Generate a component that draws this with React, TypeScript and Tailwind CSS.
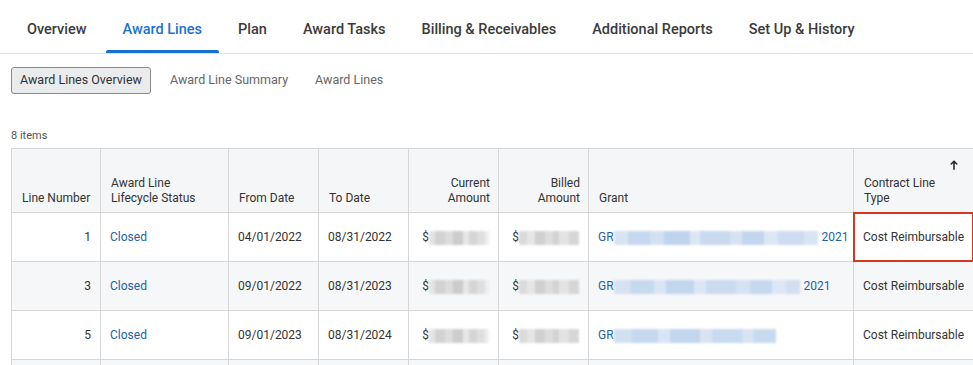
import React from "react";

const tabs = ["Overview", "Award Lines", "Plan", "Award Tasks", "Billing & Receivables", "Additional Reports", "Set Up & History"];

type Blk = [number, string];

function Blur({ blocks }: { blocks: Blk[] }) {
  return (
    <span className="inline-flex h-[14px] align-middle blur-[0.8px]">
      {blocks.map(([w, c], i) => (
        <span key={i} style={{ width: w, background: c }} className="h-full" />
      ))}
    </span>
  );
}

const grayA: Blk[] = [[6, "#e4e4e4"], [10, "#d2d2d2"], [8, "#dcdcdc"], [10, "#cccccc"], [6, "#e6e6e6"], [8, "#d5d5d5"], [8, "#dfdfdf"], [4, "#eeeeee"]];
const grayB: Blk[] = [[8, "#dadada"], [8, "#e6e6e6"], [10, "#d0d0d0"], [8, "#dddddd"], [6, "#d3d3d3"], [10, "#e3e3e3"], [10, "#d6d6d6"]];

const blueA: Blk[] = [[14, "#d6e4f3"], [22, "#c6d8ee"], [14, "#d2e1f2"], [26, "#c0d4ed"], [10, "#dbe7f5"], [30, "#c9daef"], [12, "#d6e3f3"], [22, "#c3d6ed"], [14, "#dce7f5"], [26, "#cddcf0"], [14, "#d8e5f4"]];
const blueB: Blk[] = [[16, "#d4e2f3"], [24, "#c7d9ee"], [12, "#d9e5f4"], [28, "#c2d6ed"], [12, "#dbe6f5"], [30, "#cadbf0"], [14, "#d4e2f3"], [22, "#c6d8ee"], [14, "#dce7f5"], [14, "#d1dff1"]];
const blueC: Blk[] = [[18, "#d2e1f2"], [26, "#c5d8ee"], [12, "#d9e5f4"], [30, "#c2d6ed"], [12, "#d8e4f4"], [30, "#c8daef"], [12, "#d6e3f3"], [22, "#c7d9ee"]];

const rows = [
  { n: 1, from: "04/01/2022", to: "08/31/2022", blue: blueA, year: "2021", stripe: false, red: true },
  { n: 3, from: "09/01/2022", to: "08/31/2023", blue: blueB, year: "2021", stripe: true, red: false },
  { n: 5, from: "09/01/2023", to: "08/31/2024", blue: blueC, year: "", stripe: false, red: false },
];

export default function App() {
  const font = { fontFamily: "Roboto, 'Liberation Sans', sans-serif" };
  const th = "border border-[#d6d6d6] pl-[10px] pr-[8px] pb-[6px] align-bottom font-normal text-[12px] leading-[15px] text-[#333]";
  const td = "border border-[#d6d6d6] px-[9px] text-[12px] text-[#333] align-middle";
  return (
    <div className="w-[973px] h-[365px] overflow-hidden bg-white" style={font}>
      <div className="flex h-[54px] border-b border-[#e0e0e0] pl-[10px]">
        {tabs.map((t, i) => (
          <div
            key={t}
            className={
              "relative flex items-center px-[17px] mr-[2px] pt-[7px] text-[14.5px] font-medium " +
              (i === 1 ? "text-[#1a73d2]" : "text-[#3b3b3b]")
            }
          >
            <span>{t}</span>
            {i === 1 && <span className="absolute left-0 right-0 bottom-0 h-[3px] rounded-t-[2px] bg-[#1670d0]" />}
          </div>
        ))}
      </div>
      <div className="flex items-center gap-[19px] pl-[11px] mt-[13px] text-[12.5px]">
        <div className="h-[27px] px-[8px] flex items-center border border-[#8a8a8a] rounded-[3px] bg-[#e9ebed] text-[#333]">
          Award Lines Overview
        </div>
        <div className="text-[#666] mr-[8px]">Award Line Summary</div>
        <div className="text-[#666]">Award Lines</div>
      </div>
      <div className="pl-[11px] mt-[35px] text-[11px] text-[#555] leading-[13px]">8 items</div>
      <div className="pl-[11px] mt-[6px]">
        <table className="border-collapse table-fixed w-[962px]">
          <colgroup>
            <col style={{ width: 89 }} />
            <col style={{ width: 128 }} />
            <col style={{ width: 90 }} />
            <col style={{ width: 90 }} />
            <col style={{ width: 90 }} />
            <col style={{ width: 90 }} />
            <col style={{ width: 265 }} />
            <col style={{ width: 120 }} />
          </colgroup>
          <thead>
            <tr className="h-[64px] bg-[#f5f6f7]">
              <th className={th + " text-left whitespace-nowrap"}>Line Number</th>
              <th className={th + " text-left"}>Award Line<br />Lifecycle Status</th>
              <th className={th + " text-left"}>From Date</th>
              <th className={th + " text-left"}>To Date</th>
              <th className={th + " text-right"}>Current<br />Amount</th>
              <th className={th + " text-right"}>Billed<br />Amount</th>
              <th className={th + " text-left"}>Grant</th>
              <th className={th + " text-left"}>
                <div className="flex justify-end pr-[7px] mb-[6px]">
                  <svg width="8" height="10" viewBox="0 0 8 10" fill="none" stroke="#2b2b2b" strokeWidth="1.6" strokeLinecap="round" strokeLinejoin="round">
                    <path d="M4 9.2V1.2M1.2 4L4 1.2 6.8 4" />
                  </svg>
                </div>
                Contract Line<br />Type
              </th>
            </tr>
          </thead>
          <tbody>
            {rows.map((r) => (
              <tr key={r.n} className={"h-[49px] " + (r.stripe ? "bg-[#f6f7f8]" : "bg-white")}>
                <td className={td + " text-right"}>{r.n}</td>
                <td className={td}>
                  <span className="text-[#2062a8]">Closed</span>
                </td>
                <td className={td}>{r.from}</td>
                <td className={td}>{r.to}</td>
                <td className={td + " text-right"}>
                  <span className="whitespace-nowrap">$<Blur blocks={grayA} /></span>
                </td>
                <td className={td + " text-right"}>
                  <span className="whitespace-nowrap">$<Blur blocks={grayB} /></span>
                </td>
                <td className={td + " whitespace-nowrap"}>
                  <span className="text-[#2062a8]">GR</span>
                  <Blur blocks={r.blue} />
                  {r.year && <span className="text-[#2062a8] ml-[4px]">{r.year}</span>}
                </td>
                <td className={td + " relative whitespace-nowrap"}>
                  Cost Reimbursable
                  {r.red && <span className="absolute -inset-[1px] border-2 border-[#d8361e] pointer-events-none" />}
                </td>
              </tr>
            ))}
            <tr className="h-[49px] bg-[#f6f7f8]">
              {Array.from({ length: 8 }).map((_, i) => (
                <td key={i} className={td}>&nbsp;</td>
              ))}
            </tr>
          </tbody>
        </table>
      </div>
    </div>
  );
}
